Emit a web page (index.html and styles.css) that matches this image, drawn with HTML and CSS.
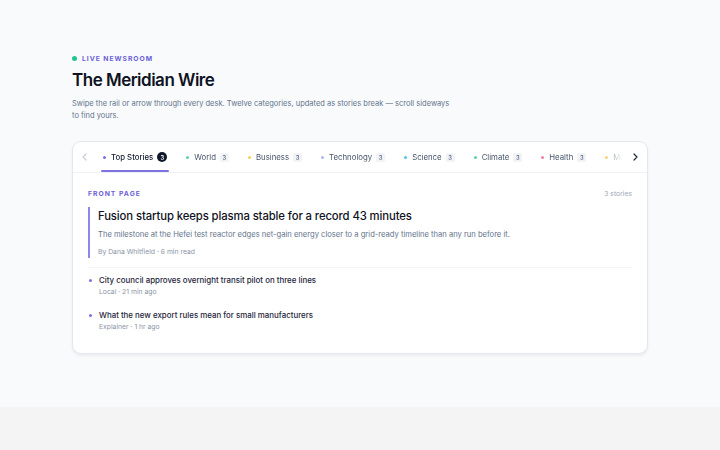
FILE: index.html
```html
<!DOCTYPE html>
<html lang="en">
<head>
<meta charset="utf-8">
<title>The Meridian Wire</title>
<link rel="stylesheet" href="styles.css">
</head>
<body>
<div class="page">
  <header class="intro">
    <div class="eyebrow"><span class="live-dot"></span>LIVE NEWSROOM</div>
    <h1 class="title">The Meridian Wire</h1>
    <p class="lede">Swipe the rail or arrow through every desk. Twelve categories, updated as stories break — scroll sideways to find yours.</p>
  </header>

  <section class="card">
    <div class="rail">
      <button class="arrow arrow-left" aria-label="Previous">
        <svg viewBox="0 0 10 10" width="10" height="10"><path d="M6 2 L3 5 L6 8" fill="none" stroke="currentColor" stroke-width="1.2" stroke-linecap="round" stroke-linejoin="round"/></svg>
      </button>
      <div class="viewport">
        <div class="tabs">
          <div class="tab active"><span class="dot dot-violet"></span>Top Stories<span class="count">3</span></div>
          <div class="tab"><span class="dot dot-teal"></span>World<span class="count">3</span></div>
          <div class="tab"><span class="dot dot-yellow"></span>Business<span class="count">3</span></div>
          <div class="tab"><span class="dot dot-lavender"></span>Technology<span class="count">3</span></div>
          <div class="tab"><span class="dot dot-sky"></span>Science<span class="count">3</span></div>
          <div class="tab"><span class="dot dot-green"></span>Climate<span class="count">3</span></div>
          <div class="tab"><span class="dot dot-pink"></span>Health<span class="count">3</span></div>
          <div class="tab"><span class="dot dot-amber"></span>Markets<span class="count">3</span></div>
          <div class="tab"><span class="dot dot-teal"></span>Sports<span class="count">3</span></div>
        </div>
      </div>
      <button class="arrow arrow-right" aria-label="Next">
        <svg viewBox="0 0 10 10" width="10" height="10"><path d="M4 2 L7 5 L4 8" fill="none" stroke="currentColor" stroke-width="1.2" stroke-linecap="round" stroke-linejoin="round"/></svg>
      </button>
    </div>

    <div class="panel">
      <div class="panel-head">
        <span class="section-label">FRONT PAGE</span>
        <span class="story-count">3 stories</span>
      </div>
      <article class="feature">
        <h2 class="feature-title">Fusion startup keeps plasma stable for a record 43 minutes</h2>
        <p class="feature-desc">The milestone at the Hefei test reactor edges net-gain energy closer to a grid-ready timeline than any run before it.</p>
        <p class="meta">By Dana Whitfield · 6 min read</p>
      </article>
      <ul class="stories">
        <li class="story">
          <span class="bullet"></span>
          <div>
            <p class="story-title">City council approves overnight transit pilot on three lines</p>
            <p class="meta">Local · 21 min ago</p>
          </div>
        </li>
        <li class="story">
          <span class="bullet"></span>
          <div>
            <p class="story-title">What the new export rules mean for small manufacturers</p>
            <p class="meta">Explainer · 1 hr ago</p>
          </div>
        </li>
      </ul>
    </div>
  </section>
</div>
</body>
</html>
```

FILE: styles.css
```css
html {
  background: #f4f4f4;
}
body {
  margin: 0;
  font-family: Inter, "Noto Sans", sans-serif;
  color: #0f172a;
}
p, h1, h2, ul { margin: 0; padding: 0; }

.page {
  background: #f8fafc;
  height: 407px;
  box-sizing: border-box;
  padding: 54px 72px 0;
}

.intro { width: 386px; }

.eyebrow {
  display: flex;
  align-items: center;
  gap: 5px;
  font-size: 6.8px;
  font-weight: 700;
  letter-spacing: 0.95px;
  color: #6d5fd8;
  line-height: 9px;
}
.live-dot {
  width: 5px;
  height: 5px;
  border-radius: 50%;
  background: #22c58b;
}

.title {
  margin-top: 5px;
  font-size: 17px;
  font-weight: 600;
  letter-spacing: -0.5px;
  line-height: 24px;
  color: #0f1222;
}

.lede {
  margin-top: 6px;
  font-size: 7.5px;
  line-height: 12px;
  color: #64748b;
}

.card {
  margin-top: 19px;
  background: #fff;
  border: 1px solid #e3e7ee;
  border-radius: 9px;
  box-shadow: 0 2px 3px rgba(15, 23, 42, 0.06);
  overflow: hidden;
}

.rail {
  display: flex;
  align-items: stretch;
  height: 30px;
  border-bottom: 1px solid #eef1f5;
}
.arrow {
  flex: none;
  width: 24px;
  border: 0;
  background: transparent;
  padding: 0;
  display: flex;
  align-items: center;
  justify-content: center;
}
.arrow-left { color: #c7ccd6; }
.arrow-right { color: #1e293b; }

.viewport {
  flex: 1;
  overflow: hidden;
  -webkit-mask-image: linear-gradient(to right, #000 96%, transparent 100%);
  mask-image: linear-gradient(to right, #000 96%, transparent 100%);
}
.tabs {
  display: flex;
  gap: 15px;
  height: 100%;
  padding-left: 4px;
}
.tab {
  flex: none;
  display: flex;
  align-items: center;
  font-size: 7.8px;
  color: #475569;
  white-space: nowrap;
  position: relative;
  padding: 0 2px;
}
.tab.active {
  color: #0f172a;
  font-weight: 500;
}
.tab.active::after {
  content: "";
  position: absolute;
  left: 0;
  right: 0;
  bottom: 0;
  height: 2px;
  background: #7c73e0;
  border-radius: 1px;
}
.dot {
  width: 3px;
  height: 3px;
  border-radius: 50%;
  margin-right: 5px;
}
.dot-violet { background: #7c6fe0; }
.dot-teal { background: #5ccfae; }
.dot-yellow { background: #f5cf55; }
.dot-lavender { background: #b0b4f5; }
.dot-sky { background: #56c2f0; }
.dot-green { background: #5dcfa8; }
.dot-pink { background: #f27aa8; }
.dot-amber { background: #f8c453; }

.count {
  margin-left: 4px;
  min-width: 9px;
  height: 9px;
  padding: 0 1px;
  box-sizing: border-box;
  border-radius: 2px;
  background: #f1f3f7;
  color: #64748b;
  font-size: 5.8px;
  font-weight: 600;
  display: flex;
  align-items: center;
  justify-content: center;
}
.tab.active .count {
  background: #0f172a;
  color: #fff;
  border-radius: 50%;
  width: 10px;
  height: 10px;
}

.panel {
  padding: 16px 15px 21px;
}
.panel-head {
  display: flex;
  justify-content: space-between;
  align-items: center;
  line-height: 10px;
}
.section-label {
  font-size: 6.8px;
  font-weight: 700;
  letter-spacing: 1px;
  color: #6d5fd8;
}
.story-count {
  font-size: 6.8px;
  color: #a0a8b6;
}

.feature {
  margin-top: 8px;
  border-left: 2px solid #8f86ea;
  padding: 1px 0 1px 8px;
}
.feature-title {
  font-size: 11.3px;
  font-weight: 500;
  line-height: 16px;
  letter-spacing: -0.1px;
  color: #0f1222;
}
.feature-desc {
  margin-top: 5px;
  font-size: 7.6px;
  line-height: 11px;
  color: #64748b;
}
.feature .meta { margin-top: 7px; }

.meta {
  font-size: 6.8px;
  line-height: 10px;
  color: #8a94a6;
}

.stories {
  list-style: none;
  margin-top: 9px;
  border-top: 1px solid #f1f3f6;
}
.story {
  display: flex;
  gap: 7px;
  padding-top: 6px;
}
.story + .story { padding-top: 12px; }
.bullet {
  flex: none;
  width: 3px;
  height: 3px;
  border-radius: 50%;
  background: #7c73e0;
  margin-top: 5px;
  margin-left: 1px;
}
.story-title {
  font-size: 7.9px;
  font-weight: 500;
  line-height: 13px;
  color: #1e253a;
}
.story .meta { margin-top: 0; }
```
